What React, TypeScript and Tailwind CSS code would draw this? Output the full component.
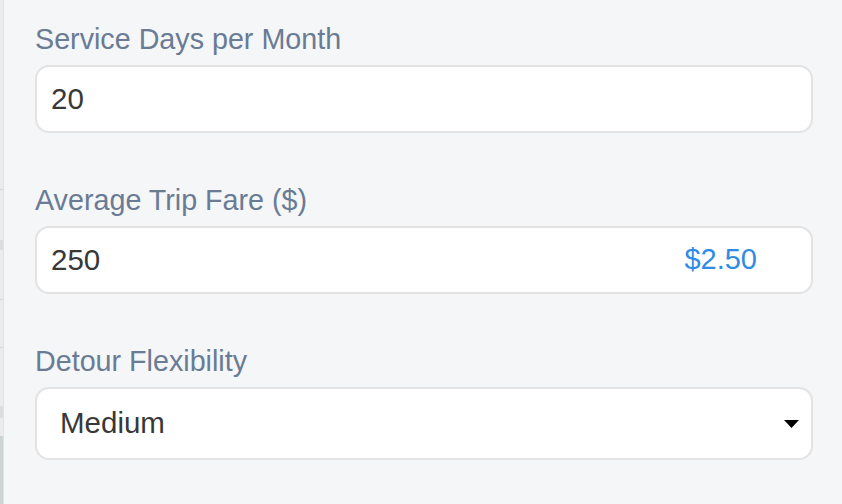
import React from 'react';

function Field({ label, children }: { label: string; children: React.ReactNode }) {
  return (
    <div className="flex flex-col">
      <label className="h-[34px] text-[28.7px] leading-[34px] text-[#6a7b94]">{label}</label>
      <div className="mt-[9px]">{children}</div>
    </div>
  );
}

function MapStrip() {
  // sliver of the map panel peeking in at the left edge
  return (
    <div className="flex w-[4px] shrink-0 flex-col bg-[#ececec] border-r border-[#e2e2e2]">
      <div className="h-[189px]" />
      <div className="h-px bg-[#d9d9d9]" />
      <div className="h-[50px]" />
      <div className="h-[10px] bg-[#dcdcdc]" />
      <div className="h-[49px]" />
      <div className="h-px bg-[#dadada]" />
      <div className="h-[47px]" />
      <div className="h-px bg-[#dadada]" />
      <div className="h-[58px]" />
      <div className="h-[12px] bg-[#dddddd]" />
      <div className="h-[18px]" />
      <div className="flex-1 bg-[#cdd3d2]" />
    </div>
  );
}

export default function App() {
  return (
    <div
      className="flex h-[504px] w-[842px] overflow-hidden bg-[#f5f6f8]"
      style={{ fontFamily: '"Liberation Sans", Arial, sans-serif' }}
    >
      <MapStrip />
      <div className="flex flex-1 flex-col gap-[50px] pl-[31px] pr-[29px] pt-[22px]">
        <Field label="Service Days per Month">
          <div className="flex h-[68px] items-center rounded-[14px] border-2 border-[#e3e3e3] bg-white pl-[14px] text-[29.5px] text-[#383838]">
            20
          </div>
        </Field>
        <Field label="Average Trip Fare ($)">
          <div className="flex h-[68px] items-center justify-between rounded-[14px] border-2 border-[#e3e3e3] bg-white pl-[14px] pr-[54px] text-[29.5px]">
            <span className="text-[#383838]">250</span>
            <span className="text-[29px] text-[#2f8be6]">$2.50</span>
          </div>
        </Field>
        <Field label="Detour Flexibility">
          <div className="flex h-[73px] items-center justify-between rounded-[14px] border-2 border-[#e3e3e3] bg-white pl-[23px] pr-[12px] text-[29.5px] text-[#383838]">
            <span>Medium</span>
            <svg width="15" height="8" viewBox="0 0 15 8">
              <path d="M0 0 H15 L7.5 8 Z" fill="#000" />
            </svg>
          </div>
        </Field>
      </div>
    </div>
  );
}
